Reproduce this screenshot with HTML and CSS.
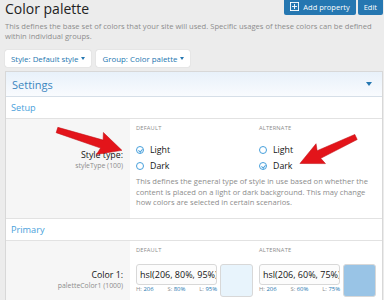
FILE: index.html
```html
<!DOCTYPE html>
<html>
<head>
    <title>Color palette</title>
    <link rel="stylesheet" href="styles.css">
</head>
<body>
    <div class="page">
        <div class="page-head">
            <h1>Color palette</h1>
            <div class="actions">
                <a class="btn">
                    <svg class="btn-icon" viewBox="0 0 10 10" width="9" height="9">
                        <rect x="0.5" y="0.5" width="9" height="9" fill="none" stroke="#fff" stroke-width="1"/>
                        <path d="M5 2.2V7.8M2.2 5H7.8" stroke="#fff" stroke-width="1"/>
                    </svg>
                    Add property
                </a>
                <a class="btn">Edit</a>
            </div>
        </div>

        <p class="page-desc">This defines the base set of colors that your site will used. Specific usages of these colors can be defined within individual groups.</p>

        <div class="filters">
            <span class="filter">Style: Default style <i class="caret"></i></span>
            <span class="filter">Group: Color palette <i class="caret"></i></span>
        </div>

        <div class="block">
            <div class="block-header">
                <span>Settings</span>
                <i class="caret caret-lg"></i>
            </div>

            <h3 class="block-minor">Setup</h3>
            <div class="form-row">
                <div class="form-label label-style">
                    <div class="label-main">Style type:</div>
                    <div class="label-hint">styleType (100)</div>
                </div>
                <div class="form-input">
                    <div class="cols">
                        <div>
                            <div class="col-title">Default</div>
                            <ul class="radios">
                                <li><span class="radio checked"></span>Light</li>
                                <li><span class="radio"></span>Dark</li>
                            </ul>
                        </div>
                        <div>
                            <div class="col-title">Alternate</div>
                            <ul class="radios">
                                <li><span class="radio"></span>Light</li>
                                <li><span class="radio checked"></span>Dark</li>
                            </ul>
                        </div>
                    </div>
                    <p class="explain">This defines the general type of style in use based on whether the content is placed on a light or dark background. This may change how colors are selected in certain scenarios.</p>
                </div>
            </div>

            <h3 class="block-minor">Primary</h3>
            <div class="form-row">
                <div class="form-label label-color">
                    <div class="label-main">Color 1:</div>
                    <div class="label-hint">paletteColor1 (1000)</div>
                </div>
                <div class="form-input">
                    <div class="cols">
                        <div>
                            <div class="col-title">Default</div>
                            <div class="color-pick">
                                <div class="color-text">
                                    <input class="input" type="text" value="hsl(206, 80%, 95%)">
                                    <div class="hsl"><span>H: <b>206</b></span><span>S: <b>80%</b></span><span>L: <b>95%</b></span></div>
                                </div>
                                <div class="swatch swatch-light"></div>
                            </div>
                        </div>
                        <div>
                            <div class="col-title">Alternate</div>
                            <div class="color-pick">
                                <div class="color-text">
                                    <input class="input" type="text" value="hsl(206, 60%, 75%)">
                                    <div class="hsl"><span>H: <b>206</b></span><span>S: <b>60%</b></span><span>L: <b>75%</b></span></div>
                                </div>
                                <div class="swatch swatch-alt"></div>
                            </div>
                        </div>
                    </div>
                </div>
            </div>
        </div>

        <svg class="arrows" width="384" height="300" viewBox="0 0 384 300">
            <g transform="translate(57 130) rotate(17.4)">
                <polygon class="arrow" points="0,-2.8 47,-4.2 45,-11.5 68,0 45,11.5 47,4.2 0,2.8"/>
            </g>
            <g transform="translate(356 137) rotate(154.7)">
                <polygon class="arrow" points="0,-2.8 41,-4.2 39,-11 62,0 39,11 41,4.2 0,2.8"/>
            </g>
        </svg>
    </div>
</body>
</html>
```

FILE: styles.css
```css
body {
    margin: 0;
    background: #ececec;
    font-family: "Open Sans", "Noto Sans", sans-serif;
    color: #141414;
    overflow: hidden;
}

.page {
    position: relative;
    padding: 0 1px 0 5px;
    height: 300px;
}

.page-head {
    display: flex;
    justify-content: space-between;
    align-items: flex-start;
}

h1 {
    margin: 0;
    font-size: 14px;
    line-height: 18px;
    font-weight: 400;
    color: #222;
}

.actions {
    display: flex;
    gap: 2px;
    margin-top: -8px;
}

.btn {
    display: flex;
    align-items: center;
    gap: 4px;
    height: 23px;
    padding: 6px 6px 0;
    box-sizing: border-box;
    background: #2577b1;
    color: #fff;
    font-size: 7.5px;
    border-radius: 0 0 2px 2px;
}

.btn-icon {
    display: block;
}

.page-desc {
    margin: 3px 0 0;
    font-size: 7.6px;
    line-height: 10px;
    color: #8c8c8c;
}

.filters {
    display: flex;
    gap: 5px;
    margin-top: 9px;
}

.filter {
    display: flex;
    align-items: center;
    gap: 3px;
    height: 17px;
    padding: 0 6px;
    background: #fff;
    border-radius: 2px;
    box-shadow: 0 0 1px rgba(0,0,0,0.25);
    font-size: 7.9px;
    color: #2577b1;
}

.caret {
    display: inline-block;
    width: 0;
    height: 0;
    border-left: 2.5px solid transparent;
    border-right: 2.5px solid transparent;
    border-top: 3px solid #2577b1;
}

.caret-lg {
    border-left-width: 3.5px;
    border-right-width: 3.5px;
    border-top-width: 4px;
}

.block {
    margin-top: 4px;
    background: #fff;
    border: 1px solid #d8d8d8;
}

.block-header {
    display: flex;
    justify-content: space-between;
    align-items: center;
    height: 24px;
    padding: 0 10px 0 6px;
    background: linear-gradient(#e8f1fa, #f9fbfe);
    border-bottom: 1px solid #d6dfe8;
    font-size: 11px;
    color: #3c86bf;
}

.block-minor {
    margin: 0;
    height: 21px;
    line-height: 21px;
    padding-left: 5px;
    font-size: 9.2px;
    font-weight: 400;
    color: #4a9fdb;
    border-bottom: 1px solid #e2e2e2;
}

.form-row {
    display: flex;
    border-bottom: 1px solid #e2e2e2;
}

.form-row:last-child {
    border-bottom: none;
}

.form-label {
    width: 124px;
    flex: none;
    box-sizing: border-box;
    padding-right: 7px;
    background: #f6f6f6;
    text-align: right;
}

.label-style {
    padding-top: 30px;
}

.label-color {
    padding-top: 28px;
}

.label-main {
    font-size: 8.8px;
    line-height: 12px;
}

.label-hint {
    font-size: 6.9px;
    line-height: 9px;
    color: #8c8c8c;
}

.form-input {
    flex: 1;
    padding: 6px 6px 0;
}

.cols {
    display: grid;
    grid-template-columns: 1fr 1fr;
    gap: 6px;
}

.col-title {
    font-size: 5.7px;
    line-height: 7px;
    text-transform: uppercase;
    letter-spacing: 0.2px;
    color: #8c8c8c;
}

.radios {
    list-style: none;
    margin: 10px 0 0;
    padding: 0;
}

.radios li {
    display: flex;
    align-items: center;
    gap: 6px;
    height: 16px;
    font-size: 8.8px;
}

.radio {
    position: relative;
    width: 8px;
    height: 8px;
    box-sizing: border-box;
    border: 1px solid #47a0dc;
    border-radius: 50%;
}

.radio.checked::after {
    content: "";
    position: absolute;
    left: 2px;
    top: 0.8px;
    width: 1.6px;
    height: 3.2px;
    border-right: 1px solid #47a0dc;
    border-bottom: 1px solid #47a0dc;
    transform: rotate(40deg);
}

.explain {
    margin: 2px 0 0;
    padding-bottom: 10px;
    font-size: 7.6px;
    line-height: 10.7px;
    color: #8c8c8c;
}

.color-pick {
    display: flex;
    gap: 3px;
    margin-top: 10px;
    padding-bottom: 4px;
}

.color-text {
    width: 81px;
    flex: none;
}

.input {
    display: block;
    width: 100%;
    height: 21px;
    margin: 0;
    box-sizing: border-box;
    padding: 0 0 0 3px;
    border: 1px solid #d8d8d8;
    border-radius: 3px;
    background: #fcfcfc;
    font-family: inherit;
    font-size: 9px;
    color: #141414;
    outline: none;
}

.hsl {
    display: flex;
    justify-content: space-between;
    font-size: 5.9px;
    line-height: 9px;
    color: #8c8c8c;
}

.hsl b {
    font-weight: 400;
    color: #2577b1;
}

.swatch {
    flex: 1;
    height: 33px;
    box-sizing: border-box;
    border: 1px solid #d8d8d8;
    border-radius: 3px;
}

.swatch-light {
    background: hsl(206, 80%, 95%);
}

.swatch-alt {
    background: hsl(206, 60%, 75%);
}

.arrows {
    position: absolute;
    top: 0;
    left: 0;
    pointer-events: none;
}

.arrow {
    fill: #e3141a;
    stroke: #c20d12;
    stroke-width: 0.5;
}
```
